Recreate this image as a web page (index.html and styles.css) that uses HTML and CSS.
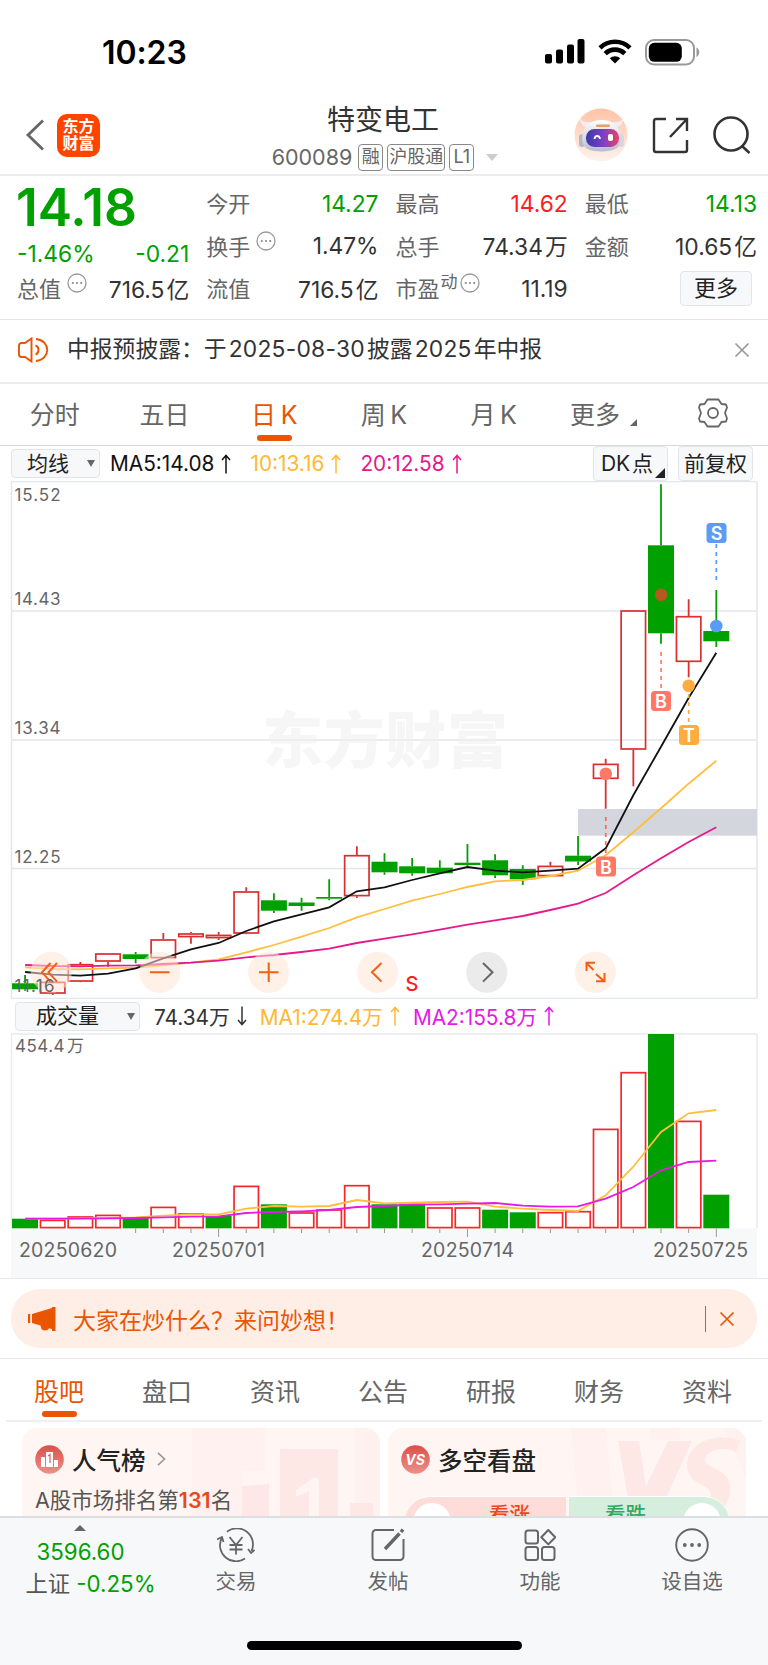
FILE: index.html
```
<!DOCTYPE html>
<html lang="zh-CN">
<head>
    <meta charset="UTF-8">
    <meta name="viewport" content="width=device-width, initial-scale=1.0">
    <title>特变电工 600089</title>
    <link rel="stylesheet" href="styles.css">
</head>
<body>

<svg class="defs" width="0" height="0">
    <symbol id="up" viewBox="0 0 10 20"><path d="M5 19.5V1.5M1 6l4-4.5L9 6" fill="none" stroke="currentColor" stroke-width="1.5"/></symbol>
    <symbol id="down" viewBox="0 0 10 20"><path d="M5 .5v18M1 14l4 4.5L9 14" fill="none" stroke="currentColor" stroke-width="1.5"/></symbol>
    <symbol id="dots" viewBox="0 0 20 20"><circle cx="10" cy="10" r="9" fill="none" stroke="#999" stroke-width="1.3"/><g fill="#888"><circle cx="5.8" cy="10" r="1.1"/><circle cx="10" cy="10" r="1.1"/><circle cx="14.2" cy="10" r="1.1"/></g></symbol>
    <symbol id="close" viewBox="0 0 16 16"><path d="M1.5 1.5l13 13M14.5 1.5l-13 13" fill="none" stroke="currentColor" stroke-width="1.7"/></symbol>
</svg>

<div class="page">

    <!-- status bar -->
    <div class="status">
        <span class="time">10:23</span>
        <div class="status-icons">
            <svg width="40" height="25" viewBox="0 0 40 25"><rect x="0" y="15" width="7" height="9.5" rx="2"/><rect x="11" y="10.5" width="7" height="14" rx="2"/><rect x="22" y="5.5" width="7" height="19" rx="2"/><rect x="32.5" y="0" width="7" height="24.5" rx="2"/></svg>
            <svg width="34" height="25" viewBox="0 0 34 25"><path d="M2 8.8a21.5 21.5 0 0 1 30 0M7.2 14.6a14 14 0 0 1 19.6 0" fill="none" stroke="#000" stroke-width="4.6"/><path d="M17 24.5l-5.2-5.3a7.6 7.6 0 0 1 10.4 0z"/></svg>
            <svg width="55" height="27" viewBox="0 0 55 27"><rect x="1" y="1" width="48" height="24.5" rx="8" fill="none" stroke="#999" stroke-width="2"/><rect x="3.8" y="3.8" width="33" height="19" rx="5.5"/><path d="M51.5 8.5c3.6 1.5 3.6 8 0 9.5z" fill="#999"/></svg>
        </div>
    </div>

    <!-- header -->
    <div class="header">
        <div class="header-left">
            <svg width="20" height="32" viewBox="0 0 20 32"><path d="M18 1.5L3 16l15 14.5" fill="none" stroke="#666" stroke-width="2.8"/></svg>
            <div class="logo"><span>东方</span><span>财富</span></div>
        </div>
        <div class="header-title">
            <h1>特变电工</h1>
            <div class="code">
                <span class="num">600089</span>
                <span class="tag">融</span>
                <span class="tag">沪股通</span>
                <span class="tag">L1</span>
                <span class="caret"></span>
            </div>
        </div>
        <div class="header-right">
            <svg width="54" height="54" viewBox="0 0 54 54">
                <defs>
                    <linearGradient id="halo" x1="0" y1="0" x2="0" y2="1"><stop offset="0" stop-color="#ffc3a6"/><stop offset="1" stop-color="#fff3ee"/></linearGradient>
                    <linearGradient id="visor" x1="0" y1="0" x2="1" y2="0"><stop offset="0" stop-color="#3c39a8"/><stop offset=".5" stop-color="#7a3fc4"/><stop offset="1" stop-color="#e8436b"/></linearGradient>
                    <linearGradient id="shell" x1="0" y1="0" x2="0" y2="1"><stop offset="0" stop-color="#ffffff"/><stop offset="1" stop-color="#b9bccb"/></linearGradient>
                </defs>
                <circle cx="27" cy="27" r="26.5" fill="url(#halo)"/>
                <path d="M6 10c0 5 2 8 6 9l5-5c-5 1-9 0-11-4zM49 10c0 5-2 8-6 9l-5-5c5 1 9 0 11-4z" fill="#f0eef2"/>
                <rect x="5" y="26" width="6" height="13" rx="3" fill="#b5b6c6"/><rect x="44" y="26" width="6" height="13" rx="3" fill="#d9d6df"/>
                <path d="M8 31c0-12 8-19 19.500-19S47 19 47 31c0 9-7 12.500-19.500 12.500S8 40 8 31z" fill="url(#shell)"/>
                <rect x="12" y="21" width="33" height="18" rx="8.500" fill="url(#visor)"/>
                <path d="M20.500 31c.5-4 5-4 5.500 0" fill="none" stroke="#fff" stroke-width="1.800"/><rect x="34" y="26" width="5" height="7" rx="2" fill="#fff"/>
                <rect x="22" y="16.500" width="14" height="2.500" rx="1" fill="#e2a267"/>
            </svg>
            <svg width="37" height="37" viewBox="0 0 37 37" fill="none" stroke="#333" stroke-width="2.4"><path d="M14 2H4a2 2 0 0 0-2 2v29a2 2 0 0 0 2 2h29a2 2 0 0 0 2-2V23M24 2h11v12M35 2L18 20"/></svg>
            <svg width="38" height="38" viewBox="0 0 38 38" fill="none" stroke="#333" stroke-width="2.6"><circle cx="18" cy="18" r="16.500"/><path d="M29 30l7.500 7"/></svg>
        </div>
    </div>

    <!-- quote -->
    <div class="quote">
        <div class="col">
            <div class="price green">14.18</div>
            <div class="cell change green"><span>-1.46%</span><span>-0.21</span></div>
            <div class="cell"><label>总值<svg class="dots"><use href="#dots"/></svg></label><span>716.5&hairsp;亿</span></div>
        </div>
        <div class="col">
            <div class="cell"><label>今开</label><span class="green">14.27</span></div>
            <div class="cell"><label>换手<svg class="dots"><use href="#dots"/></svg></label><span>1.47%</span></div>
            <div class="cell"><label>流值</label><span>716.5&hairsp;亿</span></div>
        </div>
        <div class="col">
            <div class="cell"><label>最高</label><span class="red">14.62</span></div>
            <div class="cell"><label>总手</label><span>74.34&hairsp;万</span></div>
            <div class="cell"><label>市盈<small>动</small><svg class="dots tight"><use href="#dots"/></svg></label><span>11.19</span></div>
        </div>
        <div class="col">
            <div class="cell"><label>最低</label><span class="green">14.13</span></div>
            <div class="cell"><label>金额</label><span>10.65&hairsp;亿</span></div>
            <div class="cell more-cell"><button class="more" type="button">更多</button></div>
        </div>
    </div>

    <!-- notice -->
    <div class="notice">
        <svg width="31" height="26" viewBox="0 0 31 26" fill="none" stroke="#ea5504" stroke-width="1.9"><path d="M13.500 1.500v23L7 20H3.500A2.500 2.500 0 0 1 1 17.500v-9A2.500 2.500 0 0 1 3.500 6H7zM17.500 8.500c4 1 4 8 0 9M18 2c15 1.500 15 20.500 0 22"/></svg>
        <p>中报预披露：于&hairsp;<span>2025-08-30</span>&hairsp;披露&hairsp;<span>2025</span>&hairsp;年中报</p>
        <svg class="close"><use href="#close"/></svg>
    </div>

    <!-- period tabs -->
    <div class="periods">
        <span>分时</span>
        <span>五日</span>
        <span class="active">日&thinsp;K</span>
        <span>周&thinsp;K</span>
        <span>月&thinsp;K</span>
        <span>更多<i class="corner"></i></span>
        <span><svg width="32" height="32" viewBox="-16 -16 32 32" fill="none" stroke="#666" stroke-width="1.8"><path d="M-5.500-13.500h11l3 4.500 4.500.5 1 3L12 0l2 5.500-1 3-4.500.5-3 4.500h-11l-3-4.500-4.500-.5-1-3L-12 0l-2-5.500 1-3 4.500-.5z" stroke-linejoin="round"/><circle r="5"/></svg></span>
    </div>

    <!-- moving averages -->
    <div class="ma-row">
        <button class="select" type="button">均线<i class="arrow"></i></button>
        <div class="values">
            <span class="v-black">MA5:14.08<svg class="dir"><use href="#up"/></svg></span>
            <span class="v-orange">10:13.16<svg class="dir"><use href="#up"/></svg></span>
            <span class="v-pink">20:12.58<svg class="dir"><use href="#up"/></svg></span>
        </div>
        <div class="modes">
            <button class="mode dk" type="button">DK&hairsp;点<i class="corner"></i></button>
            <button class="mode" type="button">前复权</button>
        </div>
    </div>

    <svg class="chart" id="kline" width="768" height="518" viewBox="0 481 768 518">
        <g fill="none" stroke="#e3e6ed" stroke-width="1.500">
            <rect x="11.500" y="481.500" width="745.500" height="517"/>
            <path d="M11 611H757M11 740H757M11 868.500H757"/>
        </g>
        <text x="262" y="763" class="watermark" textLength="246">东方财富</text>
        <path d="M11 740H757" stroke="#e8ebf1" stroke-width="1.500"/>
        <rect x="578" y="809" width="179" height="26.700" fill="#d3d6dc"/>
        <g id="candles"></g>
        <g class="scale">
            <text x="14.500" y="501" textLength="46">15.52</text>
            <text x="14.500" y="605" textLength="46">14.43</text>
            <text x="14.500" y="734" textLength="46">13.34</text>
            <text x="14.500" y="862.700" textLength="46">12.25</text>
        </g>
        <g id="averages"></g>

        <!-- trade marks -->
        <g stroke-width="1.700" stroke-dasharray="4 4" fill="none">
            <path d="M716.300 544v40" stroke="#5b9cf8"/>
            <path d="M661.100 652v38" stroke="#ff7866"/>
            <path d="M688.700 686v38" stroke="#ffab40"/>
            <path d="M605.800 817v40" stroke="#ff6a56"/>
        </g>
        <circle cx="661.100" cy="594.700" r="6.300" fill="#b45a1e"/>
        <circle cx="716.300" cy="626" r="6.300" fill="#5b9cf8"/>
        <circle cx="688.700" cy="685.700" r="6.300" fill="#ffab40"/>
        <circle cx="605.800" cy="773.700" r="6.300" fill="#ff7866"/>
        <g class="mark">
            <rect x="706.500" y="523" width="20" height="20" rx="3.500" fill="#5b9cf8"/><text x="716.500" y="540">S</text>
            <rect x="651" y="691" width="20" height="20" rx="3.500" fill="#ff7866"/><text x="661" y="708">B</text>
            <rect x="679" y="725" width="20" height="20" rx="3.500" fill="#ffab40"/><text x="689" y="742">T</text>
            <rect x="596" y="856.500" width="20" height="20" rx="3.500" fill="#ff7866"/><text x="606" y="873.500">B</text>
        </g>

        <!-- chart controls -->
        <g fill="#ffe4d6" fill-opacity=".55">
            <circle cx="51.300" cy="972.300" r="20.500"/><circle cx="159.700" cy="972.300" r="20.500"/><circle cx="268.700" cy="972.300" r="20.500"/><circle cx="377.700" cy="972.300" r="20.500"/><circle cx="595.300" cy="972.300" r="20.500"/>
        </g>
        <circle cx="486.700" cy="972.300" r="20.500" fill="#ebebeb"/>
        <g fill="none" stroke="#f26011" stroke-width="2">
            <path d="M50.500 963l-8.500 9.300 8.500 9.300M57 963l-8.500 9.300 8.500 9.300M150 972.300h19.500M259 972.300h19.500M268.700 962.500V982M381.500 963l-9.500 9.300 9.500 9.300"/>
            <path d="M586.500 971v-8.200h8.500M586.500 963l7 7M596 974l8.500 7.500M596 981.300h8.500V973"/>
        </g>
        <path d="M483 963l9.500 9.300-9.500 9.300" fill="none" stroke="#666" stroke-width="2"/>
        <text x="14.500" y="992" class="scale" textLength="40">11.16</text>
        <text x="405.500" y="990.500" class="sell">S</text>
    </svg>

    <!-- volume -->
    <div class="vol-row">
        <button class="select wide" type="button">成交量<i class="arrow"></i></button>
        <div class="values">
            <span class="v-dark">74.34万<svg class="dir"><use href="#down"/></svg></span>
            <span class="v-orange">MA1:274.4万<svg class="dir"><use href="#up"/></svg></span>
            <span class="v-purple">MA2:155.8万<svg class="dir"><use href="#up"/></svg></span>
        </div>
    </div>

    <svg class="chart" id="volume" width="768" height="245" viewBox="0 1033 768 245">
        <path d="M11.500 1228V1034H757v194" fill="none" stroke="#e8eaee" stroke-width="1.500"/>
        <rect x="11" y="1228.300" width="746" height="50" fill="#f7f8fa"/>
        <text x="15" y="1052" class="scale" textLength="69">454.4&#8202;万</text>
        <g id="bars"></g>
        <g class="dates">
            <text x="19" y="1256.700" textLength="98">20250620</text>
            <text x="172" y="1256.700" textLength="93">20250701</text>
            <text x="421" y="1256.700" textLength="93">20250714</text>
            <text x="653" y="1256.700" textLength="95">20250725</text>
        </g>
    </svg>

    <!-- ask banner -->
    <div class="banner-wrap">
        <div class="banner">
            <svg width="28" height="26" viewBox="0 0 28 26" fill="#ea5504"><rect x="0" y="8" width="2.200" height="9"/><path d="M4 8L24 2V1h3.500v24H24v-2l-3-.8c-1 2.500-6 3-7.500.8l-1-3.500L4 17z"/></svg>
            <p>大家在炒什么？来问妙想！</p>
            <i class="sep"></i>
            <svg class="close"><use href="#close"/></svg>
        </div>
    </div>

    <div class="sections">
        <span class="active">股吧</span>
        <span>盘口</span>
        <span>资讯</span>
        <span>公告</span>
        <span>研报</span>
        <span>财务</span>
        <span>资料</span>
    </div>

    <!-- cards, cut by the bottom bar -->
    <div class="cards">
        <div class="card">
            <svg class="card-bg" width="358" height="88" viewBox="0 0 358 88"><path d="M170 0h73v43h-23v45h-50zM333 0h25v88h-25z" fill="#fef1ef"/><path d="M220 58l27-2v32h-27zM258 21h58v67h-58zM328 75h23v13h-23z" fill="#fde8e6"/><path d="M274 62l17-12h6v38h-10V63l-13 6z" fill="#fef5f3"/></svg>
            <h2>
                <svg width="29" height="29" viewBox="0 0 29 29"><circle cx="14.500" cy="14.500" r="14.300" fill="url(#badge)"/><path d="M6 12h4v10H6zM11 7h7v15h-7zM19 15h4v7h-4z" fill="#fff"/><path d="M13 11l2-1.500V18" fill="none" stroke="#e2675f" stroke-width="1.300"/><defs><linearGradient id="badge" x1="0" y1="0" x2="0" y2="1"><stop offset="0" stop-color="#dc4f49"/><stop offset="1" stop-color="#ee908a"/></linearGradient></defs></svg>
                人气榜
                <svg class="chev" width="9" height="14" viewBox="0 0 9 14"><path d="M1 .8L7.500 7 1 13.200" fill="none" stroke="#999" stroke-width="1.700"/></svg>
            </h2>
            <p>A股市场排名第<b>131</b>名</p>
        </div>
        <div class="card">
            <svg class="card-bg" width="358" height="88" viewBox="0 0 358 88"><path d="M183 0h35l8 88h-35zM262 0h30v12h-30zM336 0h22v50z" fill="#fef1ef"/><path d="M230 13h21l7 45 22-45h24l-34 75h-27zM348 24c-14-7-31-1-31 8s29 8 25 33c-2 13-12 23-24 23h-30l6-18c20 8 29 3 29-4 0-10-24-9-24-28 0-25 31-34 53-25z" fill="#fde8e6"/></svg>
            <h2>
                <svg width="29" height="29" viewBox="0 0 29 29"><circle cx="14.500" cy="14.500" r="14.300" fill="url(#badge)"/><text x="14" y="20" class="vs">VS</text></svg>
                多空看盘
            </h2>
            <div class="vote">
                <div class="vote-up"><i></i>看涨</div>
                <div class="vote-down">看跌<i></i></div>
            </div>
        </div>
    </div>

    <!-- bottom bar -->
    <div class="footer">
        <div class="index">
            <i class="tri"></i>
            <span class="green">3596.60</span>
            <span>上证 <em class="green">-0.25%</em></span>
        </div>
        <div class="item">
            <svg width="38" height="34" viewBox="0 0 38 34" fill="none" stroke="#666" stroke-width="1.800"><path d="M10 3.800A16 16 0 0 1 34.500 23M28 30.500A16 16 0 0 1 4.500 10.500M0 11.500l5-2.500 1.500 5M37.500 22L34 25l-3-4M12.500 9l6.500 8 6.500-8M19 17v9.500M12.500 17h13M12.500 21.500h13"/></svg>
            交易
        </div>
        <div class="item">
            <svg width="34" height="34" viewBox="0 0 34 34" fill="none" stroke="#666" stroke-width="2"><path d="M23 2H5a3.500 3.500 0 0 0-3.500 3.500v23A3.500 3.500 0 0 0 5 32h24a3.500 3.500 0 0 0 3.500-3.500V11"/><path d="M14 21l14.500-15.500M30 4l2-2.500" stroke-width="3.400"/></svg>
            发帖
        </div>
        <div class="item">
            <svg width="32" height="34" viewBox="0 0 32 34" fill="none" stroke="#666" stroke-width="2"><rect x="1.500" y="2.500" width="12.500" height="13" rx="2.500"/><rect x="1.500" y="19" width="12.500" height="13" rx="2.500"/><rect x="18" y="19" width="12.500" height="13" rx="2.500"/><path d="M24.300 2l7 7.200-7 7.200-7-7.200z" stroke-linejoin="round"/></svg>
            功能
        </div>
        <div class="item">
            <svg width="34" height="34" viewBox="0 0 34 34"><circle cx="17" cy="17" r="15.800" fill="none" stroke="#666" stroke-width="1.900"/><g fill="#666"><circle cx="9.800" cy="17" r="1.900"/><circle cx="17" cy="17" r="1.900"/><circle cx="24.200" cy="17" r="1.900"/></g></svg>
            设自选
        </div>
        <div class="home"></div>
    </div>
</div>

<script>
    var START = 25.05;
    var STEP = 27.65;

    // [up?, body top, body bottom, high, low]
    var candles = [
        [0, 983.3, 989.3, 975, 990.7], [1, 981.7, 993.7, 981.7, 995], [1, 964, 981.7, 962, 982.3],
        [1, 953.3, 961.7, 953.3, 966.7], [0, 954.3, 959, 952, 963.3], [1, 939.3, 958.3, 933, 959],
        [1, 933.3, 937.3, 932, 943.7], [1, 934.7, 938.3, 932, 940], [1, 891.3, 933.7, 887.3, 934.3],
        [0, 900.3, 910.7, 893.3, 913], [0, 902.5, 906, 897.7, 910.7], [0, 897, 898.7, 879.3, 900.3],
        [1, 855, 896.3, 846.3, 898], [0, 861.7, 872.3, 853.3, 874.7], [0, 866.3, 873.3, 858, 875.7],
        [0, 867.7, 873.3, 860.3, 873.3], [0, 862.7, 865, 844, 866], [0, 860.3, 875.3, 854.3, 878],
        [0, 869, 879.3, 865.3, 885], [1, 865.7, 876.3, 861.7, 876.7], [0, 855.7, 861.5, 836, 865],
        [1, 763.7, 779, 758.7, 808.7], [1, 610.3, 749.7, 610.3, 786.3], [0, 545.3, 633.3, 484.3, 643.7],
        [1, 616, 662, 599.3, 677.3], [0, 631, 641.3, 590, 647]
    ];
    var ma5 = [972, 974.7, 975.7, 973.7, 968.3, 958.3, 949.3, 943, 931, 921.3, 914.3, 907.3, 891.3, 887.3, 880, 873.3, 867, 870.7, 872.3, 870.7, 868.7, 848.3, 795.3, 746.7, 698, 652.7];
    var ma10 = [967.3, 969, 969.3, 968.3, 967.7, 965.3, 962.7, 959.3, 952.3, 945, 936.7, 928, 917.3, 909, 900.7, 894, 887, 881.3, 880, 876, 870.7, 855.3, 832.3, 808.3, 783.7, 760.7];
    var ma20 = [965, 966, 966.3, 965.7, 965.3, 964, 962.7, 960.7, 957.3, 955, 952, 948.7, 943, 938.7, 934.3, 929.7, 924.7, 920.3, 916, 910, 903.7, 893, 875.3, 858.3, 842, 827.3];

    var volume = [1218.7, 1219.7, 1216.3, 1214.7, 1217.7, 1206.7, 1213.3, 1216, 1185.7, 1204.3, 1212.3, 1209.3, 1185, 1204.3, 1203.7, 1207.3, 1207.3, 1209.7, 1212.3, 1212, 1211, 1128.7, 1072, 1034, 1120.7, 1194.7];
    var volumeDown = [0, 4, 7, 9, 13, 14, 17, 18, 23, 25];
    var vma1 = [1218.7, 1218.7, 1218.3, 1218, 1217.3, 1215.7, 1214.3, 1214.3, 1208.7, 1206, 1206.7, 1206, 1200, 1203.3, 1202.7, 1202, 1201.7, 1206.7, 1208.7, 1210, 1211, 1195.3, 1166.7, 1132, 1113.3, 1110];
    var vma2 = [1218.7, 1218.7, 1218.7, 1218.3, 1218, 1217.3, 1216.7, 1216.3, 1213, 1212, 1211.3, 1210, 1207, 1206, 1204.7, 1204.3, 1203.7, 1203, 1205.7, 1206.7, 1206.3, 1198.7, 1187, 1170.3, 1162, 1160.7];

    function center(i) {
        return START + i * STEP;
    }

    function line(points, color) {
        var xy = points.map(function (y, i) { return center(i).toFixed(1) + "," + y; });
        return '<polyline points="' + xy.join(" ") + '" fill="none" stroke="' + color + '" stroke-width="1.8"/>';
    }

    function box(x, top, bottom, up, color) {
        if (up) {
            return '<rect x="' + (x - 12.2) + '" y="' + (top + 0.7) + '" width="24.4" height="' + Math.max(bottom - top - 1.4, 1) +
                '" fill="none" stroke="' + color + '" stroke-width="1.7"/>';
        }
        return '<rect x="' + (x - 13) + '" y="' + top + '" width="26" height="' + (bottom - top) + '" fill="#00a000"/>';
    }

    var out = "";
    candles.forEach(function (c, i) {
        var x = center(i);
        var color = c[0] ? "#d92f2f" : "#00a000";
        out += '<path d="M' + x + ' ' + c[3] + 'V' + c[1] + 'M' + x + ' ' + c[2] + 'V' + c[4] + '" stroke="' + color + '" stroke-width="1.8"/>';
        out += box(x, c[1], c[2], c[0], color);
    });
    document.getElementById("candles").innerHTML = out;
    document.getElementById("averages").innerHTML = line(ma10, "#ffbe3c") + line(ma20, "#e6198c") + line(ma5, "#111");

    // volume bars and date ticks
    out = "";
    volume.forEach(function (top, i) {
        var x = center(i);
        out += box(x, top, 1228.3, volumeDown.indexOf(i) < 0, "#f5262c");
        if (i >= 4) {
            var end = (i - 7) % 9 === 0 ? 1237 : 1233;
            out += '<path d="M' + x + ' 1228.5V' + end + '" stroke="#999" stroke-width="1"/>';
        }
    });
    document.getElementById("bars").innerHTML = out + line(vma1, "#ffbe3c") + line(vma2, "#e619e6");
</script>

</body>
</html>
```

FILE: styles.css
```
* {
    box-sizing: border-box;
}
body {
    margin: 0;
    background-color: #fff;
    color: #333;
    font-family: Inter, "Noto Sans CJK SC", sans-serif;
    font-size: 22px;
}
h1,
h2,
p {
    margin: 0;
    font-weight: 400;
}
button {
    padding: 0;
    font-family: inherit;
    color: #222;
    background-color: #f7f8fa;
    border: 1.5px solid #e2e5ea;
    border-radius: 4px;
}
svg {
    display: block;
    flex: none;
}
.defs {
    position: absolute;
}
.page {
    width: 768px;
    height: 1665px;
    overflow: hidden;
    display: flex;
    flex-direction: column;
}
.green {
    color: #00a000;
}
.red {
    color: #fa1e1e;
}

/* status bar */
.status {
    height: 102px;
    padding: 36px 68px 0 102px;
    display: flex;
    justify-content: space-between;
    align-items: flex-start;
}
.time {
    font-size: 32px;
    line-height: 34px;
    font-weight: 600;
    color: #000;
    letter-spacing: -0.1px;
}
.status-icons {
    display: flex;
    gap: 13px;
    padding-top: 3px;
}

/* header */
.header {
    height: 74px;
    padding: 0 17px 0 25px;
    display: grid;
    grid-template-columns: 180px 1fr 177px;
    border-bottom: 2px solid #ececec;
}
.header-left {
    display: flex;
    align-items: center;
    gap: 12px;
    padding-bottom: 7px;
}
.logo {
    width: 43px;
    height: 43px;
    border-radius: 10px;
    background-color: #ff4400;
    color: #fff;
    font-size: 16px;
    line-height: 17.5px;
    font-weight: 700;
    display: flex;
    flex-direction: column;
    align-items: center;
    justify-content: center;
}
.header-title {
    display: flex;
    flex-direction: column;
    align-items: center;
}
.header-title h1 {
    font-size: 28px;
    line-height: 37px;
    padding-right: 13px;
}
.code {
    display: flex;
    align-items: center;
    height: 36px;
    color: #666;
    padding: 0 9px 0 0;
}
.code .num {
    font-size: 21.5px;
    margin-right: 6px;
}
.tag {
    height: 27px;
    min-width: 25px;
    padding: 0 1px;
    margin-right: 4px;
    border: 1.5px solid #888;
    border-radius: 4px;
    font-size: 18px;
    line-height: 24px;
    text-align: center;
}
.caret {
    margin-left: 8px;
    border: 6.5px solid transparent;
    border-top: 7px solid #ccc;
    border-bottom: 0;
}
.header-right {
    display: flex;
    align-items: center;
    justify-content: flex-end;
    gap: 24px;
    padding-bottom: 7px;
}

/* quote */
.quote {
    height: 144px;
    padding: 6px 11px 0 17px;
    display: grid;
    grid-template-columns: repeat(4, 1fr);
    column-gap: 17px;
    border-bottom: 1.5px solid #e3e5ea;
}
.cell {
    height: 42.5px;
    display: flex;
    justify-content: space-between;
    align-items: center;
    font-size: 22px;
    white-space: nowrap;
}
.cell > span {
    font-size: 22.8px;
}
.cell label {
    display: flex;
    align-items: center;
    color: #666;
    margin-top: -2px;
}
.dots {
    width: 20px;
    height: 20px;
    margin: -8px 0 0 6px;
}
.dots.tight {
    margin-left: 2px;
}
.cell small {
    font-size: 17px;
    margin: -14px 0 0 1px;
}
.price {
    height: 49px;
    font-size: 51.5px;
    line-height: 51px;
    font-weight: 600;
    margin-left: -1px;
}
.change {
    height: 36px;
    padding-top: 8px;
}
.more-cell {
    justify-content: flex-end;
    padding-right: 5px;
}
.more {
    width: 72px;
    height: 35px;
    font-size: 22px;
    line-height: 30px;
}

/* notice */
.notice {
    height: 64px;
    padding: 0 18px 2px 18px;
    display: flex;
    align-items: center;
    border-bottom: 2px solid #ececec;
}
.notice p {
    flex: 1;
    padding-left: 18px;
    font-size: 22.8px;
    line-height: 30px;
    margin-top: -2px;
}
.notice p span {
    letter-spacing: 0.25px;
}
.close {
    width: 16px;
    height: 16px;
    color: #999;
}

/* period tabs */
.periods {
    height: 62px;
    display: grid;
    grid-template-columns: repeat(7, 1fr);
    border-bottom: 1.5px solid #d9dae0;
}
.periods span,
.sections span {
    position: relative;
    display: flex;
    align-items: center;
    justify-content: center;
    font-size: 25px;
    color: #666;
}
.periods span {
    padding-bottom: 3px;
}
.periods .active,
.sections .active {
    color: #ea5504;
}
.periods .active::after,
.sections .active::after {
    content: "";
    position: absolute;
    left: 50%;
    bottom: 4px;
    width: 35px;
    height: 6px;
    margin-left: -17.5px;
    border-radius: 3px;
    background-color: #ea5504;
}
.corner {
    width: 0;
    height: 0;
    border-left: 7px solid transparent;
    border-bottom: 7px solid #666;
    margin: 18px 0 0 10px;
}

/* indicator rows */
.ma-row {
    height: 35px;
    padding: 0 15px 0 11px;
    display: flex;
    align-items: center;
}
.select {
    width: 89px;
    height: 29px;
    padding: 0 4px 0 15px;
    display: flex;
    align-items: center;
    justify-content: space-between;
    font-size: 21px;
    line-height: 26px;
}
.arrow {
    border: 4.5px solid transparent;
    border-top: 7px solid #666;
    border-bottom: 0;
}
.values {
    display: flex;
    flex: 1;
    gap: 19px;
    padding-left: 10px;
    font-size: 20.8px;
    white-space: nowrap;
}
.values span {
    display: flex;
    align-items: center;
}
.dir {
    width: 10px;
    height: 20px;
    margin-left: 7px;
}
.v-black {
    color: #111;
}
.v-dark {
    color: #333;
}
.v-orange {
    color: #ffb833;
}
.v-pink {
    color: #e6198c;
}
.v-purple {
    color: #e619e6;
}
.modes {
    display: flex;
    gap: 10px;
}
.mode {
    width: 75px;
    height: 35px;
    font-size: 21px;
    line-height: 34px;
    white-space: nowrap;
}
.dk {
    display: flex;
    justify-content: center;
}
.dk .corner {
    border-left-width: 10px;
    border-bottom: 10px solid #222;
    margin: 21px -5px 0 2px;
}
.vol-row {
    height: 34px;
    padding-left: 15px;
    display: flex;
    align-items: center;
}
.vol-row .values {
    gap: 13px;
    padding-left: 14px;
}
.select.wide {
    width: 125px;
    padding-left: 20px;
}

/* charts */
.chart {
    font-family: Inter, "Noto Sans CJK SC", sans-serif;
}
.scale {
    font-size: 17px;
    fill: #666;
}
.dates {
    font-size: 19.5px;
    fill: #666;
}
.watermark {
    font-size: 61px;
    font-weight: 900;
    fill: #f6f6f7;
}
.mark {
    font-size: 18px;
    font-weight: 600;
    text-anchor: middle;
    fill: #fff;
}
.sell {
    font-size: 20px;
    font-weight: 500;
    fill: #fa1e1e;
}

/* ask banner */
.banner-wrap {
    height: 81px;
    padding: 10px 11px 0;
    border-top: 1.5px solid #e8e8ea;
    border-bottom: 1.5px solid #e8e8ea;
}
.banner {
    height: 59px;
    padding: 0 22px 0 17px;
    display: flex;
    align-items: center;
    border-radius: 29px;
    background-color: #feeee6;
    color: #ea5504;
}
.banner p {
    flex: 1;
    padding-left: 17px;
    font-size: 23px;
}
.sep {
    width: 1.5px;
    height: 26px;
    margin-right: 13px;
    background-color: #ea5504;
}
.banner .close {
    color: #ea5504;
}

/* content tabs */
.sections {
    height: 63px;
    margin: 0 6px;
    display: grid;
    grid-template-columns: repeat(7, 1fr);
    border-bottom: 2px solid #f0f0f0;
}
.sections span {
    padding: 0 2px 0 0;
}
.sections .active::after {
    bottom: 3px;
    margin-left: -18.5px;
}

/* cards */
.cards {
    height: 94px;
    padding: 6px 22px 0;
    display: grid;
    grid-template-columns: 1fr 1fr;
    gap: 8px;
    overflow: hidden;
}
.card {
    position: relative;
    height: 130px;
    padding: 16px 13px 0;
    border-radius: 15px;
    background-color: #fff6f4;
    overflow: hidden;
}
.card-bg {
    position: absolute;
    left: 0;
    top: 0;
}
.card h2 {
    position: relative;
    height: 30px;
    display: flex;
    align-items: center;
    gap: 8px;
    font-size: 24.5px;
    font-weight: 500;
    color: #222;
}
.card p {
    position: relative;
    margin-top: 11px;
    font-size: 21.5px;
    line-height: 30px;
    color: #555;
}
.card b {
    color: #ea4a1a;
    font-weight: 600;
}
.chev {
    margin-left: 3px;
}
.vs {
    font-size: 14px;
    font-weight: 700;
    font-style: italic;
    text-anchor: middle;
    fill: #fff;
}
.vote {
    position: relative;
    margin: 22px 4px 0;
    height: 50px;
    display: flex;
    gap: 3px;
    font-size: 20.5px;
    line-height: 36px;
    font-weight: 500;
}
.vote div {
    flex: 1;
    display: flex;
    border-top: 1.5px solid #fff;
}
.vote i {
    width: 38px;
    height: 38px;
    margin-top: 6px;
    border-radius: 19px;
    background-color: #fff;
}
.vote-up {
    padding-left: 8px;
    gap: 38px;
    background-color: #fedcd8;
    color: #ea4a1a;
    border-radius: 25px 0 0 25px;
}
.vote-down {
    justify-content: flex-end;
    padding-right: 8px;
    gap: 37px;
    background-color: #d5eedd;
    color: #34a862;
    border-radius: 0 25px 25px 0;
}

/* bottom bar */
.footer {
    flex: 1;
    display: grid;
    grid-template-columns: 160px repeat(4, 152px);
    grid-template-rows: 1fr 24px;
    background-color: #f7f8fa;
    border-top: 2px solid #dddee2;
}
.index {
    display: flex;
    flex-direction: column;
    align-items: center;
    padding: 7px 0 0 21px;
    color: #555;
    white-space: nowrap;
}
.index span {
    font-size: 22.3px;
    line-height: 31.5px;
}
.index span:nth-child(2) {
    margin-top: 5px;
    padding-right: 20px;
}
.index em {
    font-style: normal;
}
.tri {
    margin-right: 21px;
    border: 6px solid transparent;
    border-bottom: 6px solid #666;
    border-top: 0;
}
.item {
    display: flex;
    flex-direction: column;
    align-items: center;
    gap: 6px;
    padding-top: 10px;
    font-size: 20.5px;
    line-height: 28px;
    color: #666;
}
.home {
    grid-column: 1 / -1;
    justify-self: center;
    width: 275px;
    height: 9px;
    border-radius: 5px;
    background-color: #000;
}
```
